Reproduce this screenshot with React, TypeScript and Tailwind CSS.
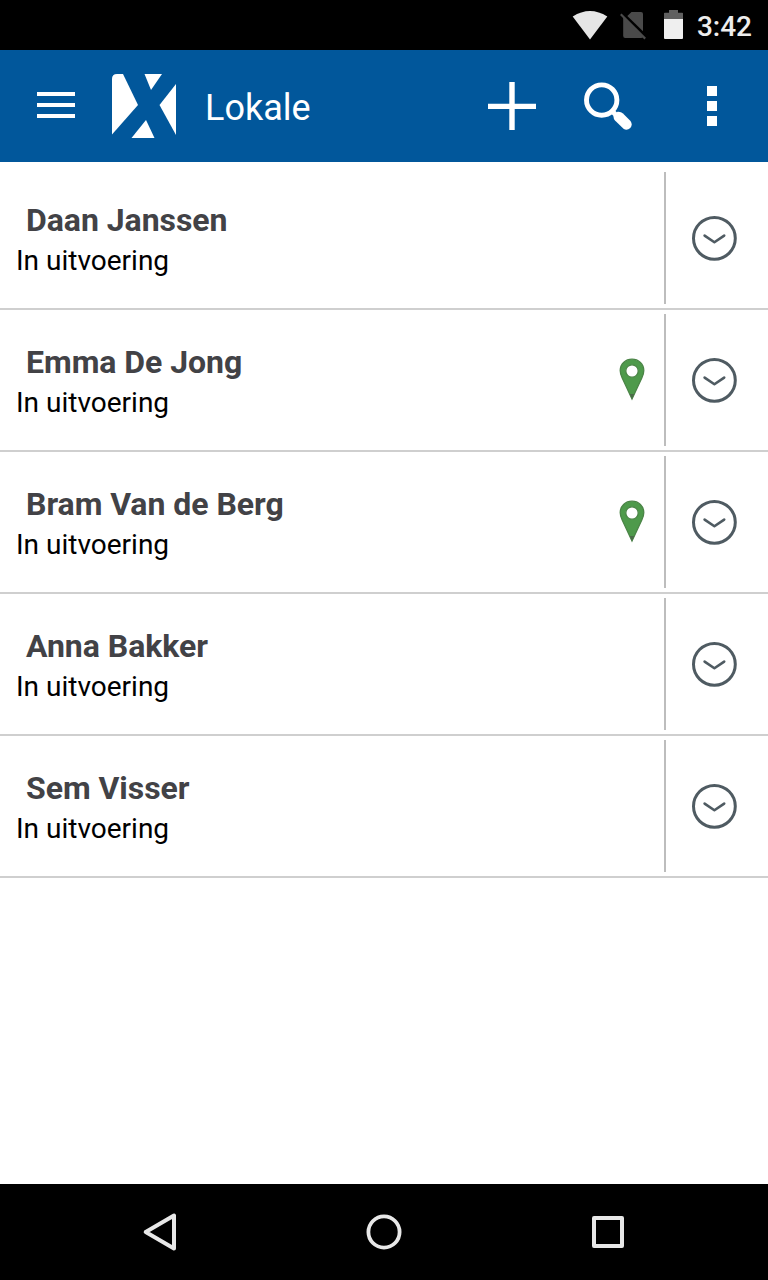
import React from 'react';

interface Participant {
  id: number;
  name: string;
  status: string;
  hasLocation: boolean;
}

const participants: Participant[] = [
  { id: 1, name: 'Daan Janssen', status: 'In uitvoering', hasLocation: false },
  { id: 2, name: 'Emma De Jong', status: 'In uitvoering', hasLocation: true },
  { id: 3, name: 'Bram Van de Berg', status: 'In uitvoering', hasLocation: true },
  { id: 4, name: 'Anna Bakker', status: 'In uitvoering', hasLocation: false },
  { id: 5, name: 'Sem Visser', status: 'In uitvoering', hasLocation: false },
];

const StatusBar: React.FC = () => (
  <div className="flex h-[50px] shrink-0 items-start justify-end bg-black pr-4">
    {/* Wifi */}
    <svg className="mt-2.5 h-[30px] w-9" viewBox="0 0 36 30" fill="#e6e6e6">
      <path d="M0.7 6.5Q18 -4.6 35.3 6.5L18 29.5Z" />
    </svg>
    {/* No SIM */}
    <svg className="mt-2.5 ml-3 h-[30px] w-[27px]" viewBox="0 0 27 30" fill="#4a4a4a">
      <path d="M11.5 2H21Q23 2 23 4V21.2L7.3 6Z" />
      <path d="M3.2 7L23 27Q22.5 28 21 28H5.2Q3.2 28 3.2 26Z" />
      <path d="M0.8 4.2L25.2 28.6" stroke="#4a4a4a" strokeWidth="2.2" />
    </svg>
    {/* Battery */}
    <svg className="mt-2.5 ml-[17px] h-[30px] w-[19px]" viewBox="0 0 19 30">
      <path d="M0 9V3.3Q0 2.7 0.8 2.7H5V0H14V2.7H18.2Q19 2.7 19 3.3V9Z" fill="#606060" />
      <path d="M0 9H19V28Q19 29 18 29H1Q0 29 0 28Z" fill="#efefef" />
    </svg>
    <span className="mt-2.5 ml-3.5 text-[28px] leading-[33px] font-medium text-[#ededed]">3:42</span>
  </div>
);

const AppBar: React.FC = () => (
  <header className="flex h-28 shrink-0 items-center bg-[#01579b] text-white">
    <button type="button" className="ml-[37px] flex w-[38px] flex-col gap-[7px] pb-0.5" aria-label="Menu">
      <span className="h-1 w-full bg-white" />
      <span className="h-1 w-full bg-white" />
      <span className="h-1 w-full bg-white" />
    </button>

    {/* Logo */}
    <svg className="ml-[37px] h-16 w-16" viewBox="0 0 64 64" fill="#fff">
      <path d="M0 5Q0 0 5 0H11L26 31L0 60.5Z" />
      <path d="M32.5 0H50L39 16Z" />
      <path d="M64 10V61L47.5 31Z" />
      <path d="M34 46L42.5 64H19.5Z" />
    </svg>

    <h1 className="ml-[29px] pt-[3px] text-[36px] leading-[42px] font-normal">Lokale</h1>

    <div className="ml-auto flex items-center pr-[51px]">
      <button type="button" aria-label="Toevoegen">
        <svg className="h-12 w-12" viewBox="0 0 48 48" fill="#fff">
          <path d="M21.3 0H26.7V21.7H48V26.9H26.7V48H21.3V26.9H0V21.7H21.3Z" />
        </svg>
      </button>
      <button type="button" className="ml-12" aria-label="Zoeken">
        <svg className="h-12 w-12" viewBox="0 0 48 48" fill="none" stroke="#fff">
          <circle cx="17.7" cy="18.1" r="15.2" strokeWidth="4.9" />
          <path d="M27 28L32 33" strokeWidth="5" />
          <path d="M29.5 34L33.5 29.8Q37 29.5 39 31.5L46.5 39Q49 43 46.3 46Q43 49 39.5 46.8L31 38.5Q29.3 36.5 29.5 34Z" fill="#fff" stroke="none" />
        </svg>
      </button>
      <button type="button" className="ml-[75px] flex flex-col gap-[5px]" aria-label="Meer opties">
        <span className="size-2.5 bg-white" />
        <span className="size-2.5 bg-white" />
        <span className="size-2.5 bg-white" />
      </button>
    </div>
  </header>
);

const LocationPin: React.FC = () => (
  <svg className="mr-[18px] mb-0.5 h-[44px] w-7" viewBox="0 0 28 44">
    <path
      fillRule="evenodd"
      d="M14 2.2C7.3 2.2 2.2 7.2 2.2 13.5C2.2 16.5 3 18.5 4.2 21L14 42L23.8 21C25 18.5 25.8 16.5 25.8 13.5C25.8 7.2 20.7 2.2 14 2.2ZM14 7.8A6.2 6.2 0 1 1 14 20.2A6.2 6.2 0 1 1 14 7.8Z"
      fill="#4e9a4b"
      stroke="#4b8547"
      strokeWidth="1.3"
    />
    <path d="M11.8 37L14 42L16.2 37Z" fill="#4b6b49" />
  </svg>
);

const ParticipantRow: React.FC<{ participant: Participant }> = ({ participant }) => (
  <li className="flex h-[142px] border-b-2 border-[#cfcfcf]">
    <div className="flex-1 pt-[33px] pl-4">
      <p className="pl-[10px] text-[32px] leading-[38px] font-bold tracking-[-0.04px] text-[#424246]">
        {participant.name}
      </p>
      <p className="mt-[5px] text-[28px] leading-[33px] text-black">{participant.status}</p>
    </div>
    <div className="flex items-center">{participant.hasLocation && <LocationPin />}</div>
    <button
      type="button"
      className="my-1 flex w-[104px] items-center border-l-2 border-[#bdbdbd] pl-[25px]"
      aria-label="Details"
    >
      <svg
        className="h-[46px] w-[46px]"
        viewBox="0 0 46 46"
        fill="none"
        stroke="#4f5b62"
        strokeWidth="3"
      >
        <circle cx="23.4" cy="23.3" r="20.9" />
        <path d="M13.6 20.6L23.4 27.3L33.2 20.6" strokeLinecap="round" strokeLinejoin="round" strokeWidth="2.6" />
      </svg>
    </button>
  </li>
);

const NavigationBar: React.FC = () => (
  <nav className="flex h-24 shrink-0 items-center justify-center gap-44 bg-black">
    <svg className="size-12" viewBox="0 0 48 48" fill="none" stroke="#e8e8e8" strokeWidth="4" strokeLinejoin="round">
      <path d="M9.7 24L38 7.5V40.5Z" />
    </svg>
    <svg className="size-12" viewBox="0 0 48 48" fill="none" stroke="#e8e8e8" strokeWidth="3.8">
      <circle cx="24" cy="24" r="15.6" />
    </svg>
    <svg className="size-12" viewBox="0 0 48 48" fill="none" stroke="#e8e8e8" strokeWidth="4" strokeLinejoin="round">
      <path d="M10 10H38V38H10Z" />
    </svg>
  </nav>
);

export default function App() {
  return (
    <div className="flex h-screen w-full flex-col bg-white font-['Roboto',sans-serif]">
      <StatusBar />
      <AppBar />
      <main className="flex-1 pt-1.5">
        <ul>
          {participants.map((participant) => (
            <ParticipantRow key={participant.id} participant={participant} />
          ))}
        </ul>
      </main>
      <NavigationBar />
    </div>
  );
}
